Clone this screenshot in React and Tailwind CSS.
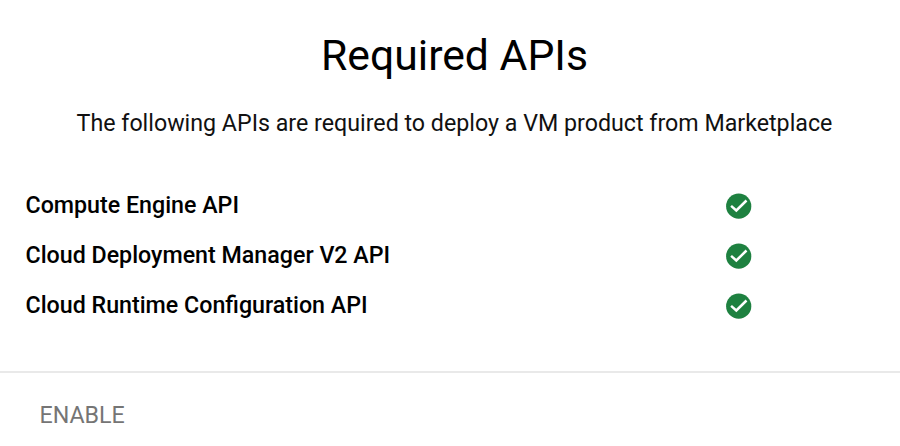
const apis = ['Compute Engine API', 'Cloud Deployment Manager V2 API', 'Cloud Runtime Configuration API'];

function CheckIcon() {
  return (
    <svg viewBox="0 0 26 26" className="size-[26px]" fill="none">
      <circle cx="12.7" cy="13.2" r="12.6" fill="#1e8140" />
      <path d="M5.100 12.900L10.300 17.500L20.500 7.500" stroke="white" strokeWidth="2.500" />
    </svg>
  );
}

export default function App() {
  return (
    <main className="flex h-[446px] w-[900px] flex-col overflow-hidden bg-white font-['Roboto',sans-serif]">
      <h1 className="mt-[30px] pl-[9px] text-center text-[42.700px] leading-[50px] text-black">Required APIs</h1>
      <p className="mt-[28px] pl-[9px] text-center text-[23.220px] leading-[30px] text-[#111]">The following APIs are required to deploy a VM product from Marketplace</p>
      <ul className="mt-[43px] pl-[25.500px]">
        {apis.map((name) => (
          <li key={name} className="flex h-[50px] items-center">
            <span className="w-[700.500px] pb-[2px] text-[23.220px] font-medium leading-[30px] text-black">{name}</span>
            <CheckIcon />
          </li>
        ))}
      </ul>
      <footer className="mt-[40px] flex h-[75px] items-center border-t-2 border-[#e9e9e9] pl-[39.500px] pt-[12px] text-[23.220px] text-[#757575]">
        <button>ENABLE</button>
      </footer>
    </main>
  );
}
